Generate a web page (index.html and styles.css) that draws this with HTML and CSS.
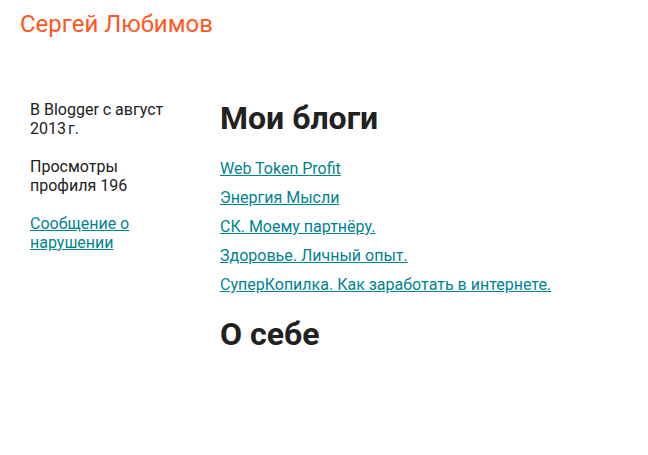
FILE: index.html
```html
<!DOCTYPE html>
<html lang="ru">
<head>
<meta charset="utf-8">
<title>Сергей Любимов</title>
<link rel="stylesheet" href="styles.css">
</head>
<body>
<header class="header">
  <h1 class="title">Сергей Любимов</h1>
</header>
<div class="layout">
  <aside class="sidebar">
    <p class="side-item">В Blogger с август 2013&#8239;г.</p>
    <p class="side-item">Просмотры профиля 196</p>
    <p class="side-item"><a class="link" href="#">Сообщение о нарушении</a></p>
  </aside>
  <main class="main">
    <h2 class="heading">Мои блоги</h2>
    <ul class="blogs">
      <li class="blog"><a class="link" href="#">Web Token Profit</a></li>
      <li class="blog"><a class="link" href="#">Энергия Мысли</a></li>
      <li class="blog"><a class="link" href="#">СК. Моему партнёру.</a></li>
      <li class="blog"><a class="link" href="#">Здоровье. Личный опыт.</a></li>
      <li class="blog"><a class="link" href="#">СуперКопилка. Как заработать в интернете.</a></li>
    </ul>
    <h2 class="heading">О себе</h2>
  </main>
</div>
</body>
</html>
```

FILE: styles.css
```css
html, body {
  margin: 0;
  padding: 0;
  background: #ffffff;
}
body {
  font-family: Roboto, "Noto Sans", sans-serif;
  color: #212121;
  font-size: 16px;
  line-height: 19px;
}
.header {
  padding: 10px 20px 0;
}
.title {
  margin: 0;
  font-size: 24px;
  line-height: 28px;
  font-weight: 400;
  color: #ff5722;
}
.layout {
  display: flex;
  padding: 62px 0 0 30px;
}
.sidebar {
  width: 142px;
  flex: none;
}
.side-item {
  margin: 0 0 19px;
}
.main {
  margin-left: 48px;
  flex: 1;
}
.heading {
  margin: 0;
  font-size: 32px;
  line-height: 36px;
  font-weight: 700;
  color: #212121;
}
.blogs {
  list-style: none;
  margin: 23px 0 22px;
  padding: 0;
  display: flex;
  flex-direction: column;
  gap: 10px;
}
.link {
  color: #00838f;
  text-decoration: underline;
}
```
